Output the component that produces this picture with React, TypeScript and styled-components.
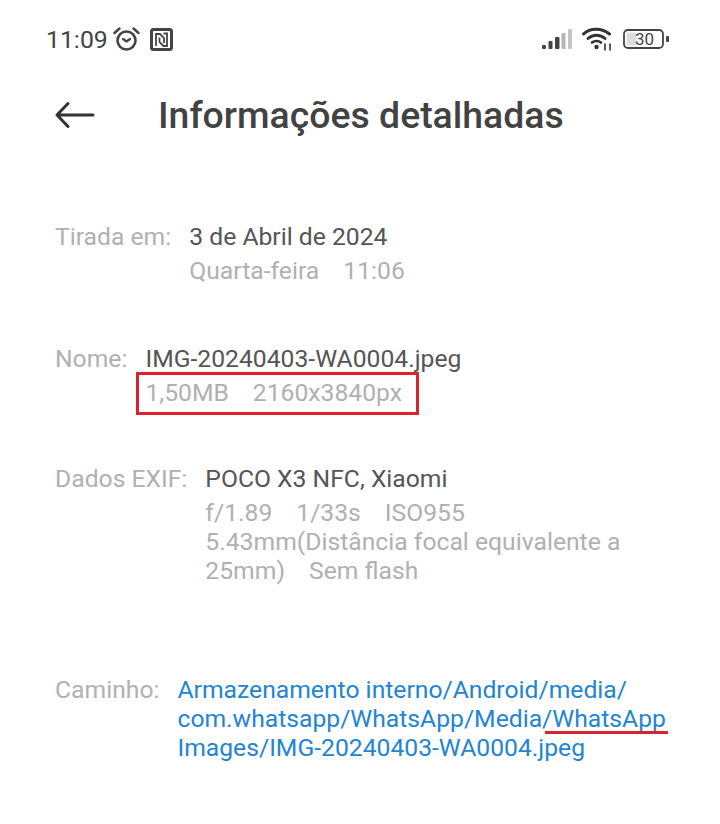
import styled, { createGlobalStyle } from 'styled-components'

const Global = createGlobalStyle`
  html, body {
    margin: 0;
    background: #ffffff;
  }
  body {
    font-family: Roboto, "Liberation Sans", sans-serif;
  }
`

const Page = styled.div`
  width: 720px;
  height: 824px;
  overflow: hidden;
  background: #fff;
`

const StatusBar = styled.div`
  height: 26px;
  padding: 26px 50px 0 46px;
  display: flex;
  align-items: center;
  justify-content: space-between;
`

const StatusGroup = styled.div<{ $gap: number }>`
  display: flex;
  align-items: center;
  gap: ${(p) => p.$gap}px;
`

const Clock = styled.span`
  font-size: 24.8px;
  color: #444;
`

const NfcIcon = styled.svg`
  margin-left: 5px;
`

const Header = styled.header`
  margin-top: 30px;
  padding-left: 55px;
  display: flex;
  align-items: center;
  gap: 63px;
  height: 66px;
`

const Title = styled.h1`
  margin: 0;
  font-size: 37.4px;
  font-weight: 500;
  color: #424242;
  white-space: nowrap;
`

const Sections = styled.main`
  padding: 74px 40px 0 55px;
`

const Row = styled.section<{ $top: number }>`
  display: flex;
  gap: 18px;
  margin-top: ${(p) => p.$top}px;
  font-size: 24.7px;
  line-height: 29px;
`

const Label = styled.div`
  color: #b0b0b0;
  white-space: nowrap;
`

const Value = styled.div`
  color: #555;
`

const Detail = styled.div<{ $top?: number }>`
  color: #b0b0b0;
  margin-top: ${(p) => p.$top ?? 0}px;
`

const Spaced = styled.span`
  margin-right: 24px;
`

const Marked = styled.div`
  position: relative;
  color: #b0b0b0;
  margin-top: 5px;
`

const RedBox = styled.span`
  position: absolute;
  left: -9px;
  top: -6px;
  width: 283px;
  height: 43px;
  box-sizing: border-box;
  border: 3px solid #d9232e;
`

const LinkText = styled.div`
  color: #2384d2;
  position: relative;
  white-space: nowrap;
`

const RedLine = styled.span`
  position: absolute;
  left: 368px;
  top: 56px;
  width: 123px;
  height: 3px;
  background: #d9232e;
`

export default function App() {
  return (
    <Page>
      <Global />
      <StatusBar>
        <StatusGroup $gap={5}>
          <Clock>11:09</Clock>
          <svg width="27" height="26" viewBox="0 0 27 26" fill="none" stroke="#444" strokeLinecap="round">
            <circle cx="13.5" cy="14.5" r="9" strokeWidth="2.6" />
            <path d="M10 13 L13.500 15.500 L17 13" strokeWidth="2.2" strokeLinejoin="round" />
            <path d="M1.500 7 L6.500 2.500 M25.500 7 L20.500 2.500" strokeWidth="2.4" />
          </svg>
          <NfcIcon width="23" height="23" viewBox="0 0 23 23" fill="none" stroke="#444">
            <rect x="1.500" y="1.500" width="20" height="20" rx="2" strokeWidth="3" />
            <path d="M6 18 V6 H10 L14 10 V15 M9.500 9.500 V14 L13.500 18 H17 V5.500 H13.500" strokeWidth="1.800" />
          </NfcIcon>
        </StatusGroup>
        <StatusGroup $gap={10}>
          <svg width="30" height="20" viewBox="0 0 30 20">
            <rect x="0" y="16" width="4" height="4" rx="1" fill="#444" />
            <rect x="6.500" y="12" width="4" height="8" rx="1" fill="#444" />
            <rect x="13" y="8" width="4.500" height="12" rx="1" fill="#444" />
            <rect x="19.500" y="4" width="4" height="16" rx="1" fill="#b5b5b5" />
            <rect x="26" y="0" width="4" height="20" rx="1" fill="#c4c4c4" />
          </svg>
          <svg width="31" height="24" viewBox="0 0 31 24" fill="none" stroke="#333" strokeLinecap="round">
            <path d="M1.500 7 C8 0.500 20 0.500 27.500 7" strokeWidth="3" />
            <path d="M6 11.500 C11 7 18 7 23 11.500" strokeWidth="3" />
            <path d="M10 15.500 C12.500 13.500 16.500 13.500 19 15.500" strokeWidth="2.600" />
            <circle cx="14.500" cy="20" r="2.200" fill="#333" stroke="none" />
            <path d="M23 17 V23 M28 17 V23" strokeWidth="1.600" />
          </svg>
          <svg width="47" height="22" viewBox="0 0 47 22">
            <rect x="1" y="2" width="39" height="18" rx="4" fill="none" stroke="#444" strokeWidth="1.800" />
            <rect x="3.500" y="4.500" width="10" height="13" rx="2" fill="#dcdcdc" />
            <text x="21.500" y="16.800" textAnchor="middle" fontSize="17" fontFamily="Roboto, sans-serif" fill="#444">30</text>
            <rect x="43" y="8" width="3" height="6" rx="1" fill="#444" />
          </svg>
        </StatusGroup>
      </StatusBar>

      <Header>
        <svg width="40" height="30" viewBox="0 0 40 30" fill="none" stroke="#333" strokeWidth="3" strokeLinecap="round" strokeLinejoin="round">
          <path d="M38 15 H2 M13 3.500 L2 15 L13 26.500" />
        </svg>
        <Title>Informações detalhadas</Title>
      </Header>

      <Sections>
        <Row $top={0}>
          <Label>Tirada em:</Label>
          <div>
            <Value>3 de Abril de 2024</Value>
            <Detail $top={5}>
              <Spaced>Quarta-feira</Spaced>11:06
            </Detail>
          </div>
        </Row>

        <Row $top={59}>
          <Label>Nome:</Label>
          <div>
            <Value>IMG-20240403-WA0004.jpeg</Value>
            <Marked>
              <Spaced>1,50MB</Spaced>2160x3840px
              <RedBox />
            </Marked>
          </div>
        </Row>

        <Row $top={57}>
          <Label>Dados EXIF:</Label>
          <div>
            <Value>POCO X3 NFC, Xiaomi</Value>
            <Detail $top={5}>
              <Spaced>f/1.89</Spaced>
              <Spaced>1/33s</Spaced>ISO955
            </Detail>
            <Detail>
              5.43mm(Distância focal equivalente a<br />
              <Spaced>25mm)</Spaced>Sem flash
            </Detail>
          </div>
        </Row>

        <Row $top={90}>
          <Label>Caminho:</Label>
          <LinkText>
            Armazenamento interno/Android/media/<br />
            com.whatsapp/WhatsApp/Media/WhatsApp<br />
            Images/IMG-20240403-WA0004.jpeg
            <RedLine />
          </LinkText>
        </Row>
      </Sections>
    </Page>
  )
}
